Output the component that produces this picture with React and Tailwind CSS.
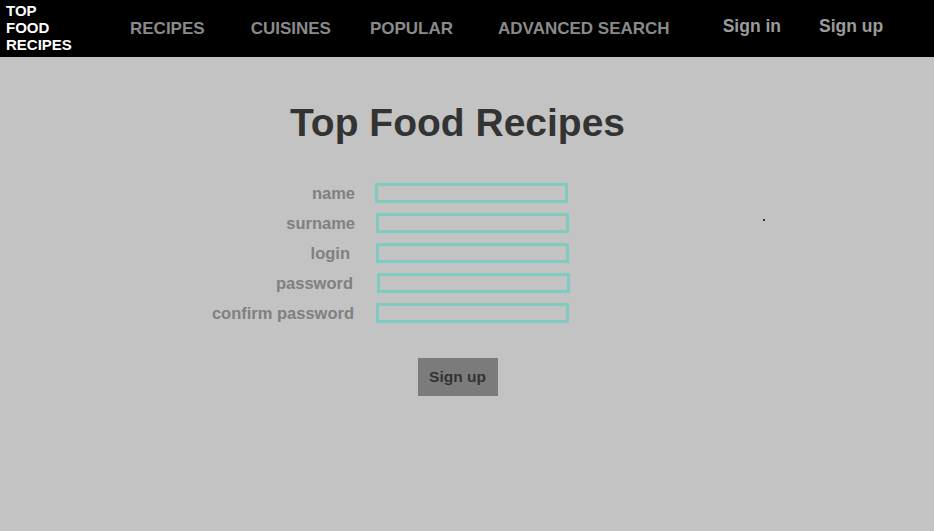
import React from "react";

const F = { fontFamily: '"Liberation Sans", Arial, sans-serif' };

function Row({ label, labelShift = 0, inputShift = 0 }) {
  return (
    <>
      <div className="flex h-[30px] items-center justify-end">
        <span
          className="text-[16.5px] font-bold text-[#808080]"
          style={labelShift ? { marginRight: labelShift } : undefined}
        >
          {label}
        </span>
      </div>
      <div className="flex h-[30px] items-center">
        <input
          className="box-border h-[20px] w-[193px] border-[3px] border-[#7fcbc1] bg-transparent outline-none"
          style={inputShift ? { marginLeft: inputShift } : undefined}
        />
      </div>
    </>
  );
}

export default function App() {
  return (
    <div className="relative min-h-[531px] w-full bg-[#c3c3c3]" style={F}>
      <header className="flex h-[57px] items-start bg-black">
        <div className="w-[130px] pl-[6px] pt-[2px] text-[15px] font-bold leading-[17px] text-white">
          TOP
          <br />
          FOOD
          <br />
          RECIPES
        </div>
        <nav className="flex items-start pt-[20px] text-[17px] font-bold leading-none text-[#8a8a8a]">
          <span>RECIPES</span>
          <span className="ml-[46px]">CUISINES</span>
          <span className="ml-[39px]">POPULAR</span>
          <span className="ml-[45px]">ADVANCED SEARCH</span>
        </nav>
        <div className="ml-[53px] flex items-start pt-[18px] text-[17.5px] font-bold leading-none text-[#9b9b9b]">
          <span>Sign in</span>
          <span className="ml-[38px]">Sign up</span>
        </div>
      </header>

      <main className="w-[915px] pt-[46px]">
        <h1 className="text-center text-[39px] font-bold leading-none text-[#333333]">
          Top Food Recipes
        </h1>

        <div className="mt-[36px] grid grid-cols-[155px_193px] gap-x-[20px] pl-[200px]">
          <Row label="name" />
          <Row label="surname" inputShift={1} />
          <Row label="login" labelShift={5} inputShift={1} />
          <Row label="password" labelShift={2} inputShift={2} />
          <Row label="confirm password" labelShift={1} inputShift={1} />
        </div>

        <div className="mt-[30px] flex justify-center">
          <button className="h-[38px] w-[80px] bg-[#7b7b7b] text-[15.5px] font-bold text-[#333333]">
            Sign up
          </button>
        </div>
      </main>

      <div className="absolute left-[763px] top-[219px] h-[2px] w-[2px] bg-[#333333]" />
    </div>
  );
}
